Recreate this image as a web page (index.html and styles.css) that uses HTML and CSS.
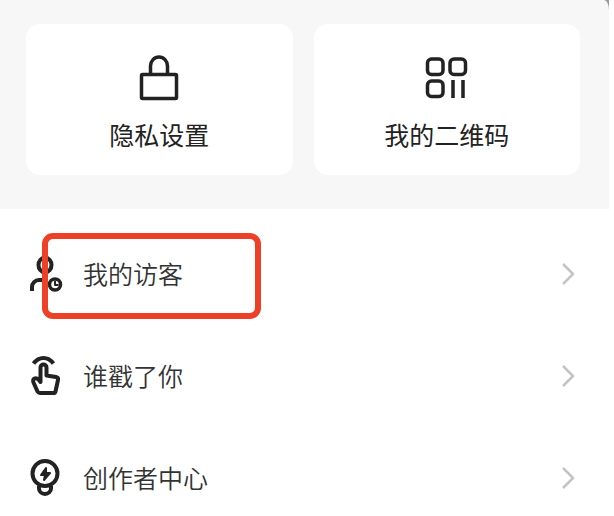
FILE: index.html
```html
<!DOCTYPE html>
<html lang="zh-CN">
<head>
  <meta charset="UTF-8">
  <meta name="viewport" content="width=device-width, initial-scale=1.0">
  <title>我的</title>
  <link rel="stylesheet" href="styles.css">
</head>
<body>
  <div class="drawer">
    <div class="panel">
      <div class="cards">
        <button class="card" type="button">
          <svg class="card-icon" viewBox="0 0 48 48" stroke-width="3.5">
            <rect x="6.5" y="20.5" width="35" height="24" rx="1"/>
            <path d="M15.5 20V12a8.500 9 0 0 1 17 0v8"/>
          </svg>
          <span>隐私设置</span>
        </button>
        <button class="card" type="button">
          <svg class="card-icon" viewBox="0 0 48 48" stroke-width="3.5">
            <rect x="4.5" y="5" width="15.5" height="15.500" rx="4"/>
            <rect x="27" y="5" width="15.5" height="15.500" rx="4"/>
            <rect x="4.5" y="27" width="15.5" height="15.500" rx="4"/>
            <path d="M30 26v18M40 26v18"/>
          </svg>
          <span>我的二维码</span>
        </button>
      </div>
    </div>

    <nav class="menu">
      <a class="row" href="#visitors">
        <svg class="row-icon" viewBox="0 0 40 44" stroke-width="4">
          <ellipse cx="19" cy="13" rx="6.5" ry="7.5"/>
          <path d="M6 39v-4a7 7 0 0 1 7-7h9"/>
          <circle cx="29" cy="32.5" r="5.5" stroke-width="3.5"/>
          <path d="M29 29v4h3.5" stroke-width="2"/>
        </svg>
        <span class="row-text">我的访客</span>
        <svg class="arrow" viewBox="0 0 14 24" stroke-width="2.5"><path d="M2 2l10 10L2 22"/></svg>
        <span class="highlight"></span>
      </a>
      <a class="row" href="#poke">
        <svg class="row-icon" viewBox="0 0 40 44" stroke-width="4">
          <path d="M7.5 9.500C13 2 22 2 27.500 9.500"/>
          <path d="M14.5 28V13.500a3 3 0 0 1 6 0v8l9.500 1.500q2.500.5 2 3l-2.500 11.500q-.5 1.500-2 1.500H14q-1.500 0-2.500-1.500L7.500 28.500q-1-3 1-4 2-1 4 1z"/>
        </svg>
        <span class="row-text">谁戳了你</span>
        <svg class="arrow" viewBox="0 0 14 24" stroke-width="2.5"><path d="M2 2l10 10L2 22"/></svg>
      </a>
      <a class="row" href="#creator">
        <svg class="row-icon" viewBox="0 0 40 44" stroke-width="4">
          <circle cx="19" cy="17.5" r="12.5"/>
          <path d="M13 30v2.500a6 5.500 0 0 0 12 0V30"/>
          <path d="M20 12l-5 7h4l-1 5 6-7h-4z" fill="#222" stroke-width="2"/>
        </svg>
        <span class="row-text">创作者中心</span>
        <svg class="arrow" viewBox="0 0 14 24" stroke-width="2.5"><path d="M2 2l10 10L2 22"/></svg>
      </a>
    </nav>
  </div>
</body>
</html>
```
FILE: styles.css
```css
* {
  box-sizing: border-box;
}

body {
  margin: 0;
  background-color: #fff;
  color: #222;
  font-family: "Noto Sans CJK SC", sans-serif;
  font-size: 25px;
  line-height: 36px;
}

.drawer {
  margin-right: 5px;
}

/* grey shows behind the rounded top corner */
.panel {
  background: linear-gradient(to left, #999 20px, #f8f7f8 20px);
}

.cards {
  display: grid;
  grid-template-columns: 1fr 1fr;
  gap: 21px;
  padding: 24px 29px 34px 26px;
  background-color: #f8f7f8;
  border-top-right-radius: 5px 10px;
}

.card {
  display: flex;
  flex-direction: column;
  align-items: center;
  gap: 14px;
  padding: 30px 0 23px;
  border: none;
  border-radius: 14px;
  background-color: #fff;
  color: inherit;
  font: inherit;
  cursor: pointer;
}

.card-icon,
.row-icon,
.arrow {
  fill: none;
  stroke: #222;
  stroke-linejoin: round;
}

.card-icon {
  width: 48px;
  height: 48px;
}

.menu {
  display: flex;
  flex-direction: column;
  gap: 38px;
  padding-top: 33px;
}

.row {
  position: relative;
  display: flex;
  align-items: center;
  gap: 17px;
  padding: 10px 34px 10px 26px;
  color: #333;
  font-weight: 350;
  text-decoration: none;
}

.row-icon {
  width: 40px;
  height: 44px;
}

.row-text {
  flex: 1;
  padding-bottom: 3px;
}

.arrow {
  width: 14px;
  height: 24px;
  stroke: #c4c4c4;
}

.highlight {
  position: absolute;
  top: -9px;
  left: 42px;
  width: 219px;
  height: 86px;
  border: 6px solid #ee4027;
  border-radius: 11px;
  pointer-events: none;
}
```
